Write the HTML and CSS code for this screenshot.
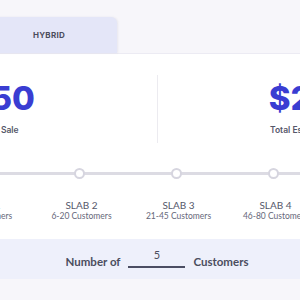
FILE: index.html
```html
<!DOCTYPE html>
<html lang="en">
<head>
    <meta charset="UTF-8">
    <title>Pricing - Hybrid</title>
    <link rel="stylesheet" href="styles.css">
</head>
<body>
    <div class="page">
        <div class="tabs">
            <div class="tab tab-active">HYBRID</div>
        </div>

        <div class="card">
            <div class="stats">
                <div class="stat">
                    <div class="amount">$50</div>
                    <div class="label">Per Sale</div>
                </div>
                <div class="stat stat-split">
                    <div class="amount">$250</div>
                    <div class="label">Total Estimated Cost</div>
                </div>
            </div>

            <div class="slabs">
                <div class="slab"><span class="knob"></span><div class="slab-name">SLAB 0</div><div class="slab-range">0 Customers</div></div>
                <div class="slab"><span class="knob"></span><div class="slab-name">SLAB 1</div><div class="slab-range">1-5 Customers</div></div>
                <div class="slab"><span class="knob"></span><div class="slab-name">SLAB 2</div><div class="slab-range">6-20 Customers</div></div>
                <div class="slab"><span class="knob"></span><div class="slab-name">SLAB 3</div><div class="slab-range">21-45 Customers</div></div>
                <div class="slab"><span class="knob"></span><div class="slab-name">SLAB 4</div><div class="slab-range">46-80 Customers</div></div>
                <div class="slab"><span class="knob"></span><div class="slab-name">SLAB 5</div><div class="slab-range">81+ Customers</div></div>
            </div>
        </div>

        <div class="counter">
            <span>Number of</span>
            <span class="count">5</span>
            <span>Customers</span>
        </div>
    </div>
</body>
</html>
```

FILE: styles.css
```css
body {
    margin: 0;
    background: #f7f6fa;
    font-family: 'Lato', 'Open Sans', sans-serif;
    color: #4b4d5e;
    overflow: hidden;
}

/* page is wider than the window; centre line sits at x=157 */
.page {
    width: 620px;
    margin-left: -153px;
}

.tabs {
    display: flex;
    height: 53px;
    padding-top: 17px;
    padding-left: 134px;
    box-sizing: border-box;
    background: #f7f6fa;
}

.tab {
    width: 136px;
    display: flex;
    align-items: center;
    justify-content: center;
    font-family: 'Inter', sans-serif;
    font-size: 8px;
    font-weight: 700;
    letter-spacing: 0.3px;
    color: #4b4c5c;
}

.tab-active {
    background: #e4e6f8;
    border-radius: 0 6px 0 0;
    box-shadow: 1px 0 2px rgba(120, 120, 160, 0.12);
}

.card {
    background: #fff;
    height: 186px;
    border-top: 1px solid #ecebf3;
    box-sizing: border-box;
}

.stats {
    display: flex;
    margin-top: 21px;
    height: 68px;
}

.stat {
    width: 310px;
    text-align: center;
}

.stat-split {
    border-left: 1px solid #ecebf0;
}

.amount {
    margin-top: 7px;
    font-family: 'Inter', sans-serif;
    font-size: 33px;
    line-height: 33px;
    font-weight: 800;
    color: #3a3dd2;
}

.label {
    margin-top: 9px;
    font-family: 'Inter', sans-serif;
    font-size: 8.5px;
    line-height: 12px;
    font-weight: 600;
    color: #55576a;
}

.slabs {
    display: flex;
    position: relative;
    margin-top: 25px;
    margin-left: -10px;
}

.slabs::before {
    content: "";
    position: absolute;
    left: 0;
    right: 0;
    top: 4px;
    height: 3px;
    background: #dcdbe3;
}

.slab {
    width: 97px;
    display: flex;
    flex-direction: column;
    align-items: center;
}

.knob {
    position: relative;
    z-index: 1;
    width: 11px;
    height: 11px;
    box-sizing: border-box;
    border: 2px solid #d6d5df;
    border-radius: 50%;
    background: #fff;
}

.slab-name {
    margin-top: 20px;
    padding-left: 4px;
    font-size: 10px;
    line-height: 12px;
    color: #55586a;
}

.slab-range {
    padding-left: 4px;
    font-size: 8.5px;
    line-height: 11px;
    color: #66687a;
}

.counter {
    display: flex;
    align-items: center;
    justify-content: center;
    gap: 8px;
    height: 40px;
    background: #eef0fb;
    font-size: 11.5px;
    font-weight: 700;
    color: #4b4d5e;
    padding-top: 4px;
    box-sizing: border-box;
}

.count {
    width: 57px;
    text-align: center;
    font-size: 11px;
    font-weight: 400;
    line-height: 14px;
    padding-bottom: 4px;
    margin-bottom: 6px;
    border-bottom: 2px solid #4b4d63;
}
```
